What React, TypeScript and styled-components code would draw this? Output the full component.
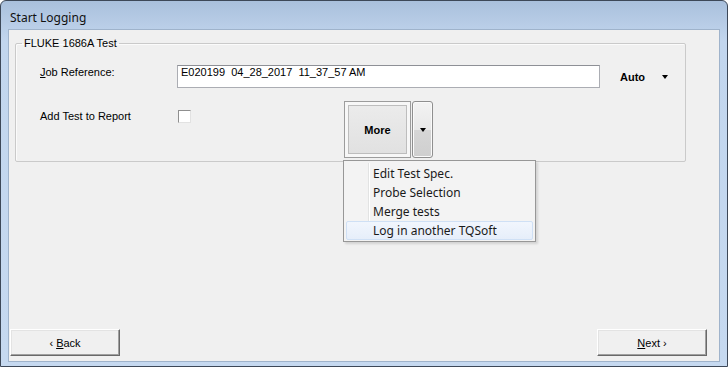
import React from 'react';
import styled, { createGlobalStyle } from 'styled-components';

const GlobalStyle = createGlobalStyle`
  html, body {
    margin: 0;
    padding: 0;
    background: #ffffff;
  }
  * {
    box-sizing: border-box;
  }
`;

const menuItems = ['Edit Test Spec.', 'Probe Selection', 'Merge tests', 'Log in another TQSoft'];

const App = () => {
  const activeItem = 3;

  return (
    <>
      <GlobalStyle />
      <Window>
        <TitleBar>Start Logging</TitleBar>
        <Client>
          <GroupBox>
            <GroupLegend>FLUKE 1686A Test</GroupLegend>
            <FormGrid>
              <FieldLabel>
                <u>J</u>ob Reference:
              </FieldLabel>
              <TextField>E020199&nbsp; 04_28_2017&nbsp; 11_37_57 AM</TextField>
              <ModeSelect>
                <span>Auto</span>
                <Caret />
              </ModeSelect>

              <FieldLabel $top={9}>Add Test to Report</FieldLabel>
              <ActionCell>
                <CheckBox />
                <SplitButton>
                  <MainButton>More</MainButton>
                  <ArrowButton>
                    <Caret />
                  </ArrowButton>
                  <DropMenu>
                    {menuItems.map((item, i) => (
                      <MenuItem key={item} $active={i === activeItem}>
                        {item}
                      </MenuItem>
                    ))}
                  </DropMenu>
                </SplitButton>
              </ActionCell>
            </FormGrid>
          </GroupBox>

          <ButtonRow>
            <NavButton>
              ‹ <u>B</u>ack
            </NavButton>
            <NavButton>
              <u>N</u>ext ›
            </NavButton>
          </ButtonRow>
        </Client>
      </Window>
    </>
  );
};

const Window = styled.div`
  width: 728px;
  height: 367px;
  display: flex;
  flex-direction: column;
  padding: 0 7px 4px 7px;
  border: 1px solid #3d4858;
  border-radius: 6px 6px 0 0;
  background: linear-gradient(180deg, #a9c0dc 0px, #b6cbe5 20px, #c2d6ee 40px, #c6d9f0 100%);
  font-family: 'Liberation Sans', Arial, sans-serif;
  font-size: 11px;
  color: #000;
`;

const TitleBar = styled.div`
  height: 28px;
  display: flex;
  align-items: center;
  padding: 4px 0 0 2px;
  font-family: 'Noto Sans', 'Open Sans', sans-serif;
  font-size: 12px;
  color: #111;
`;

const Client = styled.div`
  flex: 1;
  display: flex;
  flex-direction: column;
  background: #f0f0f0;
  border: 1px solid #9fb3cb;
`;

const GroupBox = styled.fieldset`
  margin: 7px 33px 0 6px;
  padding: 0 0 3px 0;
  border: 1px solid #cacaca;
  border-radius: 2px;
  box-shadow: inset 1px 1px 0 #fbfbfb;
  min-width: 0;
`;

const GroupLegend = styled.legend`
  margin-left: 6px;
  padding: 0 2px;
  line-height: 13px;
`;

const FormGrid = styled.div`
  display: grid;
  grid-template-columns: 137px 423px auto;
  row-gap: 13px;
  align-items: start;
  margin-top: 15px;
  padding-left: 24px;
`;

const FieldLabel = styled.div<{ $top?: number }>`
  margin-top: ${(p) => p.$top ?? 1}px;
  line-height: 13px;
  white-space: nowrap;
`;

const TextField = styled.div`
  height: 23px;
  padding: 0 3px;
  line-height: 13px;
  background: #ffffff;
  border: 1px solid #abadb3;
  border-top-color: #8e9096;
  white-space: nowrap;
`;

const ModeSelect = styled.div`
  display: flex;
  align-items: center;
  gap: 17px;
  height: 23px;
  padding: 1px 0 0 20px;
  font-weight: bold;
`;

const Caret = styled.span`
  display: inline-block;
  width: 0;
  height: 0;
  border-left: 3.5px solid transparent;
  border-right: 3.5px solid transparent;
  border-top: 4px solid #000;
`;

const ActionCell = styled.div`
  display: flex;
  align-items: flex-start;
`;

const CheckBox = styled.span`
  width: 13px;
  height: 13px;
  margin: 9px 0 0 1px;
  background: #ffffff;
  border: 1px solid #e2e2e2;
  border-top-color: #8f8f8f;
  border-left-color: #8f8f8f;
`;

const SplitButton = styled.div`
  position: relative;
  display: flex;
  gap: 1px;
  margin-left: 153px;
`;

const MainButton = styled.div`
  width: 67px;
  height: 57px;
  display: flex;
  align-items: center;
  justify-content: center;
  font-weight: bold;
  border: 1px solid #9c9c9c;
  background: linear-gradient(180deg, #ececec, #e0e0e0);
  box-shadow: inset 0 0 0 3px #f7f7f7, inset 0 0 0 4px #bdbdbd;
`;

const ArrowButton = styled.div`
  width: 21px;
  height: 57px;
  display: flex;
  align-items: center;
  justify-content: center;
  border: 1px solid #8f8f8f;
  border-radius: 3px;
  background: linear-gradient(180deg, #f3f3f3 0%, #e8e8e8 50%, #d6d6d6 51%, #cfcfcf 100%);
  box-shadow: inset 0 0 0 1px #fafafa;
`;

const DropMenu = styled.div`
  position: absolute;
  left: -1px;
  top: 59px;
  width: 193px;
  padding: 3px 2px 1px;
  background: #f3f3f3;
  border: 1px solid #979797;
  box-shadow: 2px 2px 2px rgba(0, 0, 0, 0.12);
  font-family: 'Noto Sans', 'Open Sans', sans-serif;
  font-size: 12px;
  color: #1a1a1a;
  z-index: 5;

  &::before {
    content: '';
    position: absolute;
    top: 2px;
    bottom: 2px;
    left: 24px;
    border-left: 1px solid #e2e3e3;
    border-right: 1px solid #ffffff;
  }
`;

const MenuItem = styled.div<{ $active?: boolean }>`
  position: relative;
  height: 19px;
  display: flex;
  align-items: center;
  padding-left: 26px;
  white-space: nowrap;
  border: 1px solid ${(p) => (p.$active ? '#cfe0f5' : 'transparent')};
  border-radius: 2px;
  background: ${(p) => (p.$active ? 'linear-gradient(180deg, #f1f6fd, #e6eefa)' : 'transparent')};
`;

const ButtonRow = styled.div`
  margin-top: auto;
  display: flex;
  justify-content: space-between;
  padding: 0 12px 5px 1px;
`;

const NavButton = styled.div`
  width: 110px;
  height: 27px;
  display: flex;
  align-items: center;
  justify-content: center;
  background: #f0f0f0;
  border: 1px solid;
  border-color: #ffffff #696969 #696969 #ffffff;
  box-shadow: inset -1px -1px 0 #a0a0a0, inset 1px 1px 0 #e3e3e3;
  white-space: pre;
`;

export default App;
